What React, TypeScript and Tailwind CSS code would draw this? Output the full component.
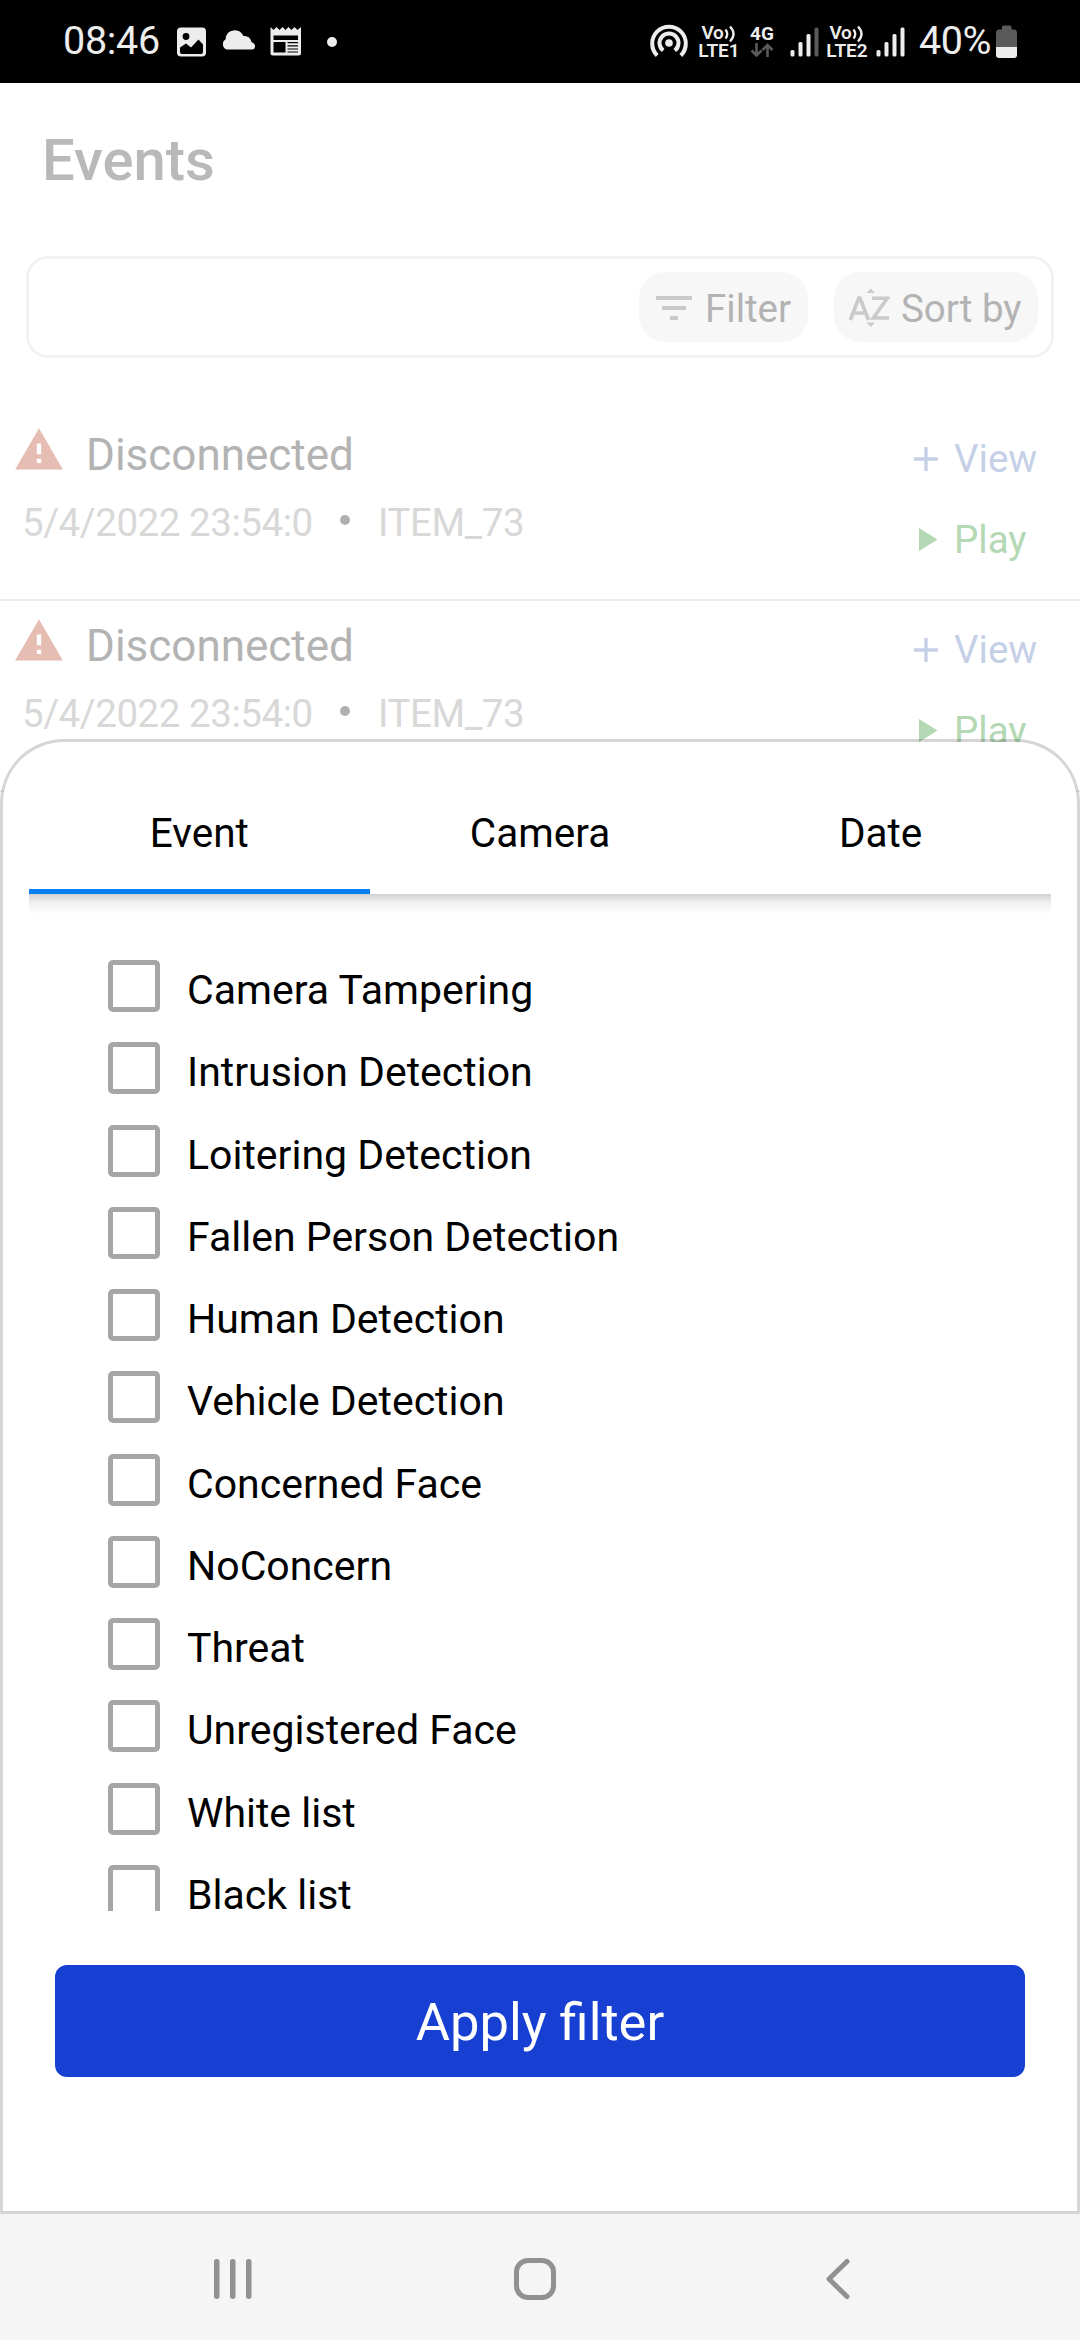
import React from "react";

const EVENT_TYPES = [
  "Camera Tampering",
  "Intrusion Detection",
  "Loitering Detection",
  "Fallen Person Detection",
  "Human Detection",
  "Vehicle Detection",
  "Concerned Face",
  "NoConcern",
  "Threat",
  "Unregistered Face",
  "White list",
  "Black list",
];

function VoLte({ slot }: { slot: string }) {
  return (
    <div className="flex w-[42px] flex-col items-center text-[19px] font-semibold leading-[18px]">
      <span className="flex h-[18px] items-center tracking-[-0.3px]">
        Vo
        <svg className="mt-[2px]" width="13" height="18" viewBox="0 0 13 18" fill="none" stroke="#ededed" strokeWidth="2.3">
          <path d="M1.500 4.5Q5 9 1.500 13.5M6 1.5Q13 9 6 16.5" />
        </svg>
      </span>
      <span>{slot}</span>
    </div>
  );
}

function Signal({ weak = false }: { weak?: boolean }) {
  return (
    <svg width="29" height="30" viewBox="0 0 29 30" fill="#ededed">
      <rect x="0.5" y="23" width="4" height="6.5" rx="1.5" />
      <rect x="8.5" y="15" width="4" height="14.5" rx="1.5" />
      <rect x="16.5" y="7" width="4" height="22.5" rx="1.5" />
      <rect x="24.5" y="0.5" width="4" height="29" rx="1.5" fill={weak ? "#5a5a5a" : "#ededed"} />
    </svg>
  );
}

function StatusBar() {
  return (
    <header className="flex h-[83px] shrink-0 items-center bg-black text-[#ededed]">
      <span className="ml-[63px] w-[114px] pb-[2px] text-[39.5px] tracking-[-0.3px]">08:46</span>
      <svg width="30" height="30" viewBox="0 0 30 30">
        <rect x="0" y="0.5" width="29" height="29" rx="4" fill="#ededed" />
        <circle cx="9" cy="9.5" r="3.4" fill="#000" />
        <path d="M3 20.5L9 16.5L14 20.5L21.5 12.5L26 17.5V25Q26 27 24 27H5Q3 27 3 25Z" fill="#000" />
      </svg>
      <svg className="ml-[14px] mb-[3px]" width="35" height="20" viewBox="0 0 35 20" fill="#ededed">
        <path d="M6 19.5A5.5 5.5 0 0 1 4.5 9.5Q5 0.5 14 0.2Q20 0.5 22.5 6Q29 5.5 30.5 12Q34.5 13.500 34 17Q33.500 19.500 31 19.500Z" />
      </svg>
      <svg className="ml-[14px] mb-[1px]" width="32" height="29" viewBox="0 0 32 29">
        <path d="M0.500 0L3.500 3L6.500 0L9.500 3L12.500 0L15.500 3L18.500 0L21.500 3L24.500 0L27.500 3L31 0V26Q31 28.500 28.500 28.500H3Q0.500 28.500 0.500 26Z" fill="#ededed" />
        <path d="M3.500 8.500H28V13H3.500ZM3.500 15H15.500V25.500H3.500ZM17.500 15H28V16.200H17.500ZM17.500 18.200H28V19.400H17.500ZM17.500 21.400H28V22.600H17.500ZM17.500 24.500H28V25.600H17.500Z" fill="#000" />
      </svg>
      <span className="ml-[25px] size-[10px] rounded-full bg-[#ededed]" />

      <div className="ml-auto flex items-center pr-[62px]">
        <svg width="40" height="40" viewBox="0 0 40 40" fill="none" stroke="#ededed" strokeWidth="4" className="mb-px">
          <circle cx="20" cy="22" r="3.800" fill="#ededed" stroke="none" />
          <path d="M14.200 29.500A9.500 9.500 0 1 1 25.800 29.500" />
          <path d="M8.200 34.500A16.800 16.800 0 1 1 31.800 34.500" />
        </svg>
        <div className="ml-[9px]">
          <VoLte slot="LTE1" />
        </div>
        <div className="ml-[8px] flex w-[28px] flex-col items-center">
          <span className="text-[19px] font-bold leading-[18px]">4G</span>
          <svg width="24" height="15" viewBox="0 0 24 15" fill="none" stroke="#5a5a5a" strokeWidth="2.600">
            <path d="M6.500 0V12.500M1.500 7.500L6.500 12.500L11.500 7.500M17.500 14V2M12.500 7L17.500 2L22.500 7" />
          </svg>
        </div>
        <div className="ml-[14px]">
          <Signal weak />
        </div>
        <div className="ml-[7px]">
          <VoLte slot="LTE2" />
        </div>
        <div className="ml-[8px]">
          <Signal />
        </div>
        <span className="ml-[14px] w-[77px] whitespace-nowrap pb-[2px] text-[39.500px] tracking-[-0.500px]">40%</span>
        <svg width="22" height="34" viewBox="0 0 22 34">
          <path d="M6 2Q6 0.500 7.500 0.500H14Q15.500 0.500 15.500 2V4.500H18Q21 4.500 21 8V22H0V8Q0 4.500 3 4.500H6Z" fill="#5a5a5a" />
          <path d="M0 22H21V30Q21 33 18 33H3Q0 33 0 30Z" fill="#ededed" />
        </svg>
      </div>
    </header>
  );
}

function Toolbar() {
  return (
    <div className="mx-[26px] flex h-[102px] items-center justify-end gap-[26px] rounded-[22px] border-[3px] border-[#f2f2f2] pr-[13px] text-[38.500px] text-[#b3b3b3]">
      <button className="flex h-[70px] w-[169px] items-center rounded-[26px] bg-[#f7f7f7] pl-[17px]">
        <svg width="36" height="24" viewBox="0 0 36 24" fill="#cacaca" className="mt-[2px]">
          <path d="M0 0H36V4H0ZM6 10H30V14H6ZM14 20H22V24H14Z" />
        </svg>
        <span className="ml-[13px] pt-[4px]">Filter</span>
      </button>
      <button className="flex h-[70px] w-[204px] items-center rounded-[26px] bg-[#f7f7f7] pl-[15px]">
        <svg width="41" height="40" viewBox="0 0 41 40" className="mt-[2px]">
          <path d="M17.500 5L21.800 0.500L26 5ZM17.500 34.500H26L21.800 39Z" fill="#cacaca" />
          <path d="M1.300 32L9.800 10H11L19.500 32M5 25H16M23 10.300H38.300L24.300 30H40" fill="none" stroke="#cacaca" strokeWidth="3.600" />
        </svg>
        <span className="ml-[11px] whitespace-nowrap pt-[4px]">Sort by</span>
      </button>
    </div>
  );
}

function EventRow() {
  return (
    <li className="flex h-[191px] items-start justify-between border-b-2 border-[#ececec]">
      <div className="pl-[13px] pt-[14px]">
        <div className="flex h-[60px]">
          <svg width="52" height="52" viewBox="0 0 24 24" fill="#e6bdb3">
            <path d="M1 21h22L12 2 1 21zm12-3h-2v-2h2v2zm0-4h-2v-5h2v5z" />
          </svg>
          <span className="ml-[21px] pt-[6px] text-[44px] leading-[50px] text-[#b3b3b3]">Disconnected</span>
        </div>
        <div className="mt-[14px] flex pl-[9px] text-[38.500px] leading-[50px] text-[#d8d8d8]">
          <span className="w-[318px] tracking-[-0.450px]">5/4/2022 23:54:0</span>
          <span className="mt-[17px] size-[10px] rounded-full bg-[#b0b0b0]" />
          <span className="ml-[28px] tracking-[-0.400px]">ITEM_73</span>
        </div>
      </div>
      <div className="flex w-[166px] flex-col gap-[31px] pt-[24px] text-[38.500px] leading-[50px]">
        <div className="flex items-center text-[#c5d0e7]">
          <svg width="24" height="24" viewBox="0 0 24 24" fill="none" stroke="currentColor" strokeWidth="3.300">
            <path d="M12 0V24M0 12H24" />
          </svg>
          <span className="ml-[16px]">View</span>
        </div>
        <div className="flex items-center text-[#b3d8b3]">
          <svg width="24" height="24" viewBox="0 0 24 24" fill="currentColor">
            <path d="M5 0V23L23.500 11.500Z" />
          </svg>
          <span className="ml-[16px]">Play</span>
        </div>
      </div>
    </li>
  );
}

function FilterSheet() {
  return (
    <section className="absolute inset-x-0 bottom-0 top-[656px] flex flex-col rounded-t-[64px] border-[3px] border-black/16 bg-white bg-clip-padding text-black">
      <nav className="mx-[26px] mt-[61px] grid h-[91px] grid-cols-3 text-center text-[40.500px] leading-[54px]">
        <span className="border-b-[5px] border-[#087ff5] pt-[3px]">Event</span>
        <span className="pt-[3px]">Camera</span>
        <span className="pt-[3px]">Date</span>
      </nav>
      <div className="mx-[26px] h-[20px] bg-linear-to-b from-[#d2d2d2] via-[#f1f1f1] via-45% to-white" />
      <ul className="mx-[26px] h-[997px] overflow-hidden pt-[46px] pl-[79px]">
        {EVENT_TYPES.map((name) => (
          <li key={name} className="flex h-[82.270px] items-start text-[41px]">
            <span className="h-[52px] w-[52px] rounded-[5px] border-[5px] border-[#a6a6a6]" />
            <span className="ml-[27px] pt-[4px] leading-[52px]">{name}</span>
          </li>
        ))}
      </ul>
      <button className="mx-[52px] mt-[54px] h-[112px] rounded-[12px] bg-[#173fd1] pt-[3px] text-[52.500px] text-white">
        Apply filter
      </button>
    </section>
  );
}

function NavigationBar() {
  return (
    <footer className="flex h-[126px] shrink-0 items-center bg-[#f5f5f5] pt-[4px]">
      <svg className="ml-[213px]" width="40" height="42" viewBox="0 0 40 42" fill="#919191">
        <rect x="1" y="1" width="5.500" height="40" rx="2.700" />
        <rect x="17" y="1" width="5.500" height="40" rx="2.700" />
        <rect x="33" y="1" width="5.500" height="40" rx="2.700" />
      </svg>
      <span className="ml-[261px] size-[42px] rounded-[14px] border-[5px] border-[#919191]" />
      <svg className="ml-[269px]" width="26" height="42" viewBox="0 0 26 42" fill="none" stroke="#919191" strokeWidth="5" strokeLinecap="round" strokeLinejoin="round">
        <path d="M22 3.500L4 21L22 38.500" />
      </svg>
    </footer>
  );
}

export default function App() {
  return (
    <div className="flex h-[2340px] w-[1080px] flex-col overflow-hidden bg-white font-['Roboto',sans-serif]">
      <StatusBar />
      <main className="relative flex-1 overflow-hidden">
        <h1 className="mb-[18px] pl-[42px] text-[58px] font-medium leading-[155px] text-[#b9b9b9]">Events</h1>
        <Toolbar />
        <ul className="mt-[52px]">
          <EventRow />
          <EventRow />
        </ul>
        <FilterSheet />
      </main>
      <NavigationBar />
    </div>
  );
}
